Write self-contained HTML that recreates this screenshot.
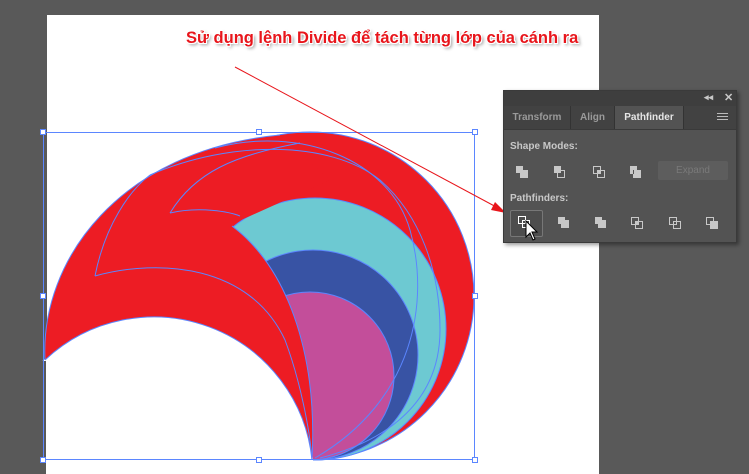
<!DOCTYPE html>
<html><head><meta charset="utf-8"><style>
html,body{margin:0;width:749px;height:474px;overflow:hidden}
body{background:#595959;font-family:"Liberation Sans",sans-serif;position:relative}
.ab{position:absolute;left:47px;top:15px;width:552px;height:459px;background:#fff}
.title{position:absolute;left:186px;top:29px;width:384px;font-weight:bold;font-size:16.5px;color:#e8151b;white-space:nowrap;text-shadow:1px 1px 0 #fff,-1px -1px 0 #fff,1px -1px 0 #fff,-1px 1px 0 #fff,2px 2px 3px #888}
.panel{position:absolute;left:503px;top:90px;width:232px;height:151px;background:#535353;border:1px solid #3a3a3a;box-shadow:2px 2px 4px rgba(0,0,0,.4);color:#c8c8c8;font-size:10px;font-weight:bold}
.hdr{height:15px;background:#3e3e3e;position:relative}
.tabs{height:23px;background:#424242;position:relative;border-bottom:1px solid #3a3a3a}
.tab{position:absolute;top:0;height:23px;line-height:23px;text-align:center;color:#9a9a9a;border-right:1px solid #333}
.lbl{position:absolute;font-size:10px;color:#c8c8c8}
</style></head><body>
<div class="ab"></div>
<svg width="749" height="474" style="position:absolute;left:0;top:0">
<circle cx="310" cy="296" r="164" fill="#ed1c24" stroke="#5b86ff" stroke-width="1"/>
<circle cx="315" cy="329" r="131" fill="#6dc9d2" stroke="#5b86ff" stroke-width="1"/>
<circle cx="313" cy="355" r="105" fill="#3853a4" stroke="#5b86ff" stroke-width="1"/>
<circle cx="310" cy="376" r="84" fill="#c34e9a" stroke="#5b86ff" stroke-width="1"/>
<path d="M312,460 A159 159 0 0 0 45 360 L47,360 L47,474 L312,474 Z" fill="#fff" stroke="#fff" stroke-width="2"/>
<path d="M45,360 C40,260 120,150 280,135 L330,180 L230,225 C285,265 318,350 312,460 A159 159 0 0 0 45 360 Z" fill="#ed1c24"/>
<path d="M45,360 C40,260 120,150 280,135" fill="none" stroke="#5b86ff"/>
<path d="M312,460 A159 159 0 0 0 45 360" fill="none" stroke="#5b86ff"/>
<path d="M232,226 C285,265 318,350 312,460" fill="none" stroke="#5b86ff"/>
<g fill="none" stroke="#5b86ff" stroke-width="1">
<path d="M95,276 C160,258 250,265 285,340 C300,380 310,430 312,460"/>
<path d="M95,276 C105,225 130,190 150,175"/>
<path d="M170,213 C200,206 230,212 240,216"/>
<path d="M170,213 C195,172 235,155 300,143"/>
<path d="M150,175 C230,140 330,140 380,180 C420,215 440,270 440,330 C440,400 390,440 320,458"/>
<path d="M215,148 C300,125 390,160 410,230 C430,300 415,400 315,458"/>
</g>
<rect x="43.5" y="132.5" width="431" height="327" fill="none" stroke="#5b86ff"/>
<g fill="#fff" stroke="#5b86ff">
<rect x="40.5" y="129.5" width="5" height="5"/><rect x="256.5" y="129.5" width="5" height="5"/><rect x="472.5" y="129.5" width="5" height="5"/>
<rect x="40.5" y="293.5" width="5" height="5"/><rect x="472.5" y="293.5" width="5" height="5"/>
<rect x="40.5" y="457.5" width="5" height="5"/><rect x="256.5" y="457.5" width="5" height="5"/><rect x="472.5" y="457.5" width="5" height="5"/>
</g>
<line x1="235" y1="67" x2="500" y2="209" stroke="#e8151b" stroke-width="1"/>
<polygon points="506,213 495,202 491,210" fill="#e8151b"/>
</svg>
<div class="title">Sử dụng lệnh Divide để tách từng lớp của cánh ra</div>
<div class="panel">
<div class="hdr"><span style="position:absolute;left:200px;top:1px;font-size:9px">◂◂</span><span style="position:absolute;left:220px;top:0;font-size:11px">✕</span></div>
<div class="tabs">
<div class="tab" style="left:0;width:66px">Transform</div>
<div class="tab" style="left:67px;width:43px">Align</div>
<div class="tab" style="left:111px;width:68px;background:#535353;color:#e6e6e6">Pathfinder</div>
<div style="position:absolute;left:213px;top:7px;width:11px;height:1px;background:#bbb;box-shadow:0 3px 0 #bbb,0 6px 0 #bbb"></div>
</div>
<div class="lbl" style="left:6px;top:50px">Shape Modes:</div>
<div class="lbl" style="left:6px;top:102px">Pathfinders:</div>
<div style="position:absolute;left:154px;top:70px;width:70px;height:19px;background:#5d5d5d;border-radius:2px;color:#7a7a7a;font-weight:normal;text-align:center;line-height:19px">Expand</div>
<div style="position:absolute;left:6px;top:119px;width:31px;height:25px;border:1px solid #777;border-radius:2px;background:#4d4d4d"></div>
<svg width="232" height="151" style="position:absolute;left:0;top:0">
<g fill="#c8c8c8" stroke="#c8c8c8">
<rect x="12" y="75" width="7" height="7" stroke="none"/><rect x="16" y="79" width="8" height="8" stroke="none"/>
<rect x="50" y="75" width="7" height="7" stroke="none"/><rect x="53.5" y="79.5" width="7" height="7" fill="none"/>
<rect x="89.5" y="75.5" width="7" height="7" fill="none"/><rect x="93.5" y="79.5" width="7" height="7" fill="none"/><rect x="93" y="79" width="4" height="4" stroke="none"/>
<path d="M126,75h7v4h-4v4h-3z M130,79h4v4h-4z M133,79h4v8h-8v-4h4z" stroke="none"/>
<rect x="14.5" y="125.5" width="7" height="7" fill="none" stroke="#fff"/><rect x="18.5" y="129.5" width="7" height="7" fill="none" stroke="#fff"/>
<rect x="54" y="126" width="7" height="7" stroke="none"/><rect x="57" y="129" width="8" height="8" stroke="none"/>
<rect x="91" y="126" width="7" height="7" stroke="none"/><rect x="94" y="129" width="8" height="8" stroke="none"/>
<rect x="127.5" y="126.5" width="7" height="7" fill="none"/><rect x="131.5" y="130.5" width="7" height="7" fill="none"/><rect x="131" y="130" width="4" height="4" stroke="none"/>
<rect x="165.5" y="126.5" width="7" height="7" fill="none"/><rect x="169.5" y="130.5" width="7" height="7" fill="none"/>
<rect x="202.5" y="126.5" width="7" height="7" fill="none"/><rect x="206" y="130" width="8" height="8" stroke="none"/>
</g>
<path d="M22,130 L22,146 L26,142 L29,149 L31,148 L28,141 L33,141 Z" fill="#fff" stroke="#000" stroke-width="1"/>
</svg>
</div>
</body></html>
